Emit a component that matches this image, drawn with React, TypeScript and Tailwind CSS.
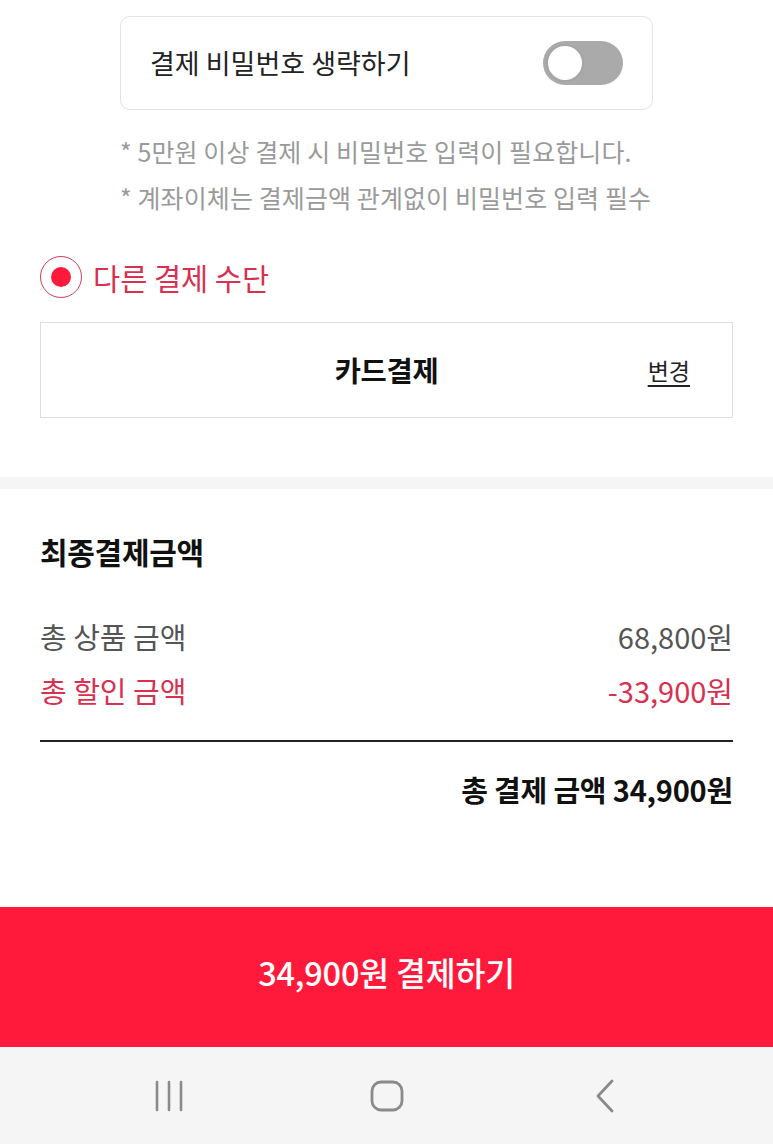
const FONT = { fontFamily: '"Noto Sans CJK KR", "Noto Sans", sans-serif' };

function Toggle() {
  return (
    <div className="flex h-[44px] w-[80px] items-center rounded-full bg-[#aaaaaa] px-[3px]">
      <div className="h-[38px] w-[38px] rounded-full border-[2px] border-[#a5a5a5] bg-white" />
    </div>
  );
}

function Radio() {
  return (
    <div className="flex h-[42px] w-[42px] items-center justify-center rounded-full border-[1.5px] border-[#d23c58]">
      <div className="h-[20px] w-[20px] rounded-full bg-[#ff1a3c]" />
    </div>
  );
}

function NavBar() {
  return (
    <div className="flex h-[97px] items-center justify-center bg-[#f5f5f5]">
      <div className="flex w-[218px] justify-center">
        <svg width="30" height="32" viewBox="0 0 30 32" className="text-[#8a8a8a]">
          <g stroke="currentColor" strokeWidth="2.6" strokeLinecap="round">
            <line x1="3" y1="2" x2="3" y2="30" />
            <line x1="15" y1="2" x2="15" y2="30" />
            <line x1="27" y1="2" x2="27" y2="30" />
          </g>
        </svg>
      </div>
      <div className="flex w-[218px] justify-center">
        <svg width="34" height="32" viewBox="0 0 34 32" className="text-[#8a8a8a]">
          <rect x="2" y="2" width="30" height="28" rx="9" fill="none" stroke="currentColor" strokeWidth="2.8" />
        </svg>
      </div>
      <div className="flex w-[218px] justify-center">
        <svg width="22" height="34" viewBox="0 0 22 34" className="text-[#8a8a8a]">
          <polyline points="18,2 4,17 18,32" fill="none" stroke="currentColor" strokeWidth="2.8" strokeLinecap="round" strokeLinejoin="round" />
        </svg>
      </div>
    </div>
  );
}

export default function App() {
  return (
    <div className="flex h-[1144px] w-[773px] flex-col overflow-hidden bg-white" style={FONT}>
      <div className="px-[40px] pt-[16px]">
        {/* 비밀번호 생략 */}
        <div className="mx-[80px] flex h-[94px] items-center justify-between rounded-[10px] border border-[#e3e3e3] pl-[29px] pr-[29px]">
          <span className="text-[27px] text-[#222]">결제 비밀번호 생략하기</span>
          <Toggle />
        </div>
        <div className="ml-[80px] mt-[24px] flex flex-col gap-[12px] text-[25px] leading-[34px] tracking-[0.1px] text-[#9a9a9a]">
          <p>* 5만원 이상 결제 시 비밀번호 입력이 필요합니다.</p>
          <p>* 계좌이체는 결제금액 관계없이 비밀번호 입력 필수</p>
        </div>

        {/* 다른 결제 수단 */}
        <div className="mt-[41px] flex items-center gap-[11px]">
          <Radio />
          <span className="text-[29.5px] text-[#d8304f]">다른 결제 수단</span>
        </div>
        <div className="mt-[23px] grid h-[96px] grid-cols-[1fr_auto_1fr] items-center border border-[#dedede] px-[42px]">
          <span />
          <span className="text-[28.5px] font-bold tracking-[-0.3px] text-[#111]">카드결제</span>
          <span className="justify-self-end text-[23px] text-[#222] underline underline-offset-[5px]">변경</span>
        </div>
      </div>

      <div className="mt-[59px] h-[12px] bg-[#f5f5f5]" />

      {/* 최종결제금액 */}
      <div className="flex-1 px-[40px]">
        <h2 className="mt-[42px] text-[30px] font-bold leading-[40px] tracking-[-0.3px] text-[#111]">최종결제금액</h2>
        <div className="mt-[45px] flex items-center justify-between text-[29px] leading-[40px] text-[#555]">
          <span>총 상품 금액</span>
          <span>68,800원</span>
        </div>
        <div className="mt-[14px] flex items-center justify-between text-[29px] leading-[40px] text-[#d8304f]">
          <span>총 할인 금액</span>
          <span>-33,900원</span>
        </div>
        <div className="mt-[30px] h-[2px] bg-[#222]" />
        <div className="mt-[27px] text-right text-[29px] font-bold leading-[40px] tracking-[-0.2px] text-[#111]">
          총 결제 금액 34,900원
        </div>
      </div>

      <button className="flex h-[140px] items-center justify-center bg-[#ff1a3c] pb-[10px] text-[32.5px] font-medium tracking-[-0.2px] text-white">
        34,900원 결제하기
      </button>
      <NavBar />
    </div>
  );
}
